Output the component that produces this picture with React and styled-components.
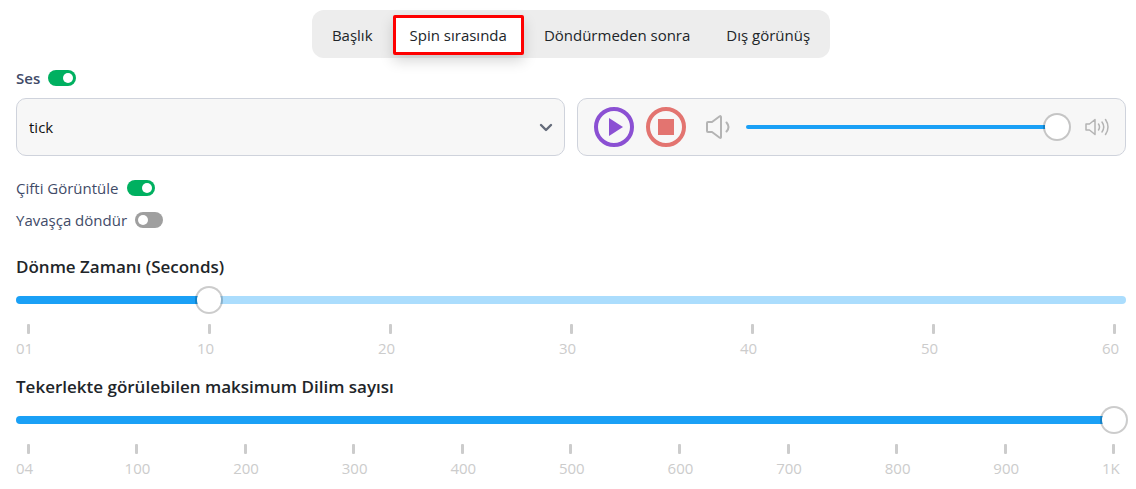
import { useState } from 'react'
import styled, { createGlobalStyle } from 'styled-components'

const colors = {
    blue: '#1aa0f6',
    lightBlue: '#abddfd',
    green: '#00b060',
    grey: '#9f9f9f',
    label: '#414b68',
    border: '#cfd3dc',
    panel: '#f7f7f7',
    tick: '#cccccc',
}

const GlobalStyle = createGlobalStyle`
    * {
        box-sizing: border-box;
    }
    body {
        margin: 0;
        background-color: #fff;
        color: #212529;
        font-family: 'Open Sans', 'Noto Sans', sans-serif;
        font-size: 15px;
        line-height: 24px;
    }
    button, input, select {
        margin: 0;
        font: inherit;
    }
`

const StyledPage = styled('main')`
    padding: 10px 10px 0 16px;
`

const StyledTabBar = styled('nav')`
    display: flex;
    width: fit-content;
    margin: 0 auto;
    padding: 5px 4px 3px;
    gap: 4px;
    border-radius: 12px;
    background-color: #ededed;
`

const StyledTab = styled('button')`
    height: 40px;
    padding: 0 ${(props) => (props.$active ? '14px' : '16px')};
    border: ${(props) => (props.$active ? '3px solid #fe0000' : 'none')};
    border-radius: 2px;
    background-color: ${(props) => (props.$active ? '#fff' : 'transparent')};
    box-shadow: ${(props) =>
        props.$active ? '0 6px 14px rgba(0, 0, 0, 0.16)' : 'none'};
    color: #212529;
    line-height: 22px;
    white-space: nowrap;
`

const StyledSwitchRow = styled('label')`
    display: flex;
    align-items: center;
    width: fit-content;
    height: ${(props) => (props.$bold ? '40px' : '32px')};
    gap: 8px;
    color: ${colors.label};
    font-weight: ${(props) => (props.$bold ? 600 : 400)};
`

const StyledSwitch = styled('input')`
    display: grid;
    align-items: center;
    appearance: none;
    width: 28px;
    height: 16px;
    padding: 0 3px;
    border-radius: 8px;
    background-color: ${colors.grey};
    &::before {
        content: '';
        width: 10px;
        height: 10px;
        border-radius: 50%;
        background-color: #fff;
    }
    &:checked {
        justify-items: end;
        background-color: ${colors.green};
    }
`

const StyledSoundGrid = styled('div')`
    display: grid;
    grid-template-columns: 1fr 1fr;
    gap: 12px;
    margin-bottom: 16px;
`

const StyledSelectBox = styled('div')`
    display: grid;
    align-items: center;
    svg {
        grid-area: 1 / 1;
        justify-self: end;
        margin-right: 12px;
        pointer-events: none;
    }
`

const StyledSelect = styled('select')`
    grid-area: 1 / 1;
    appearance: none;
    width: 100%;
    height: 58px;
    padding: 0 12px;
    border: 1px solid ${colors.border};
    border-radius: 10px;
    background-color: ${colors.panel};
    color: #111;
`

const StyledPlayer = styled('div')`
    display: flex;
    align-items: center;
    height: 58px;
    padding: 0 16px;
    border: 1px solid ${colors.border};
    border-radius: 10px;
    background-color: ${colors.panel};
`

const StyledRoundButton = styled('button')`
    display: grid;
    place-items: center;
    flex: none;
    width: 40px;
    height: 40px;
    margin-right: 12px;
    padding: 0;
    border: 4px solid ${(props) => props.$color};
    border-radius: 50%;
    background-color: transparent;
    color: ${(props) => props.$color};
`

const StyledVolume = styled('div')`
    display: flex;
    align-items: center;
    flex: 1;
    padding-left: 8px;
    gap: 16px;
    color: #b4b4b4;
    svg {
        flex: none;
    }
`

const StyledRange = styled('input')`
    --fill: calc(12px + (100% - 24px) * ${(props) => props.$fill});
    display: block;
    appearance: none;
    flex: 1;
    width: 100%;
    min-width: 0;
    height: 24px;
    background: transparent;
    &::-webkit-slider-runnable-track {
        height: ${(props) => props.$thickness}px;
        border-radius: 4px;
        background: linear-gradient(
            to right,
            ${colors.blue} var(--fill),
            ${colors.lightBlue} var(--fill)
        );
    }
    &::-webkit-slider-thumb {
        appearance: none;
        width: 24px;
        height: 24px;
        margin-top: ${(props) => (props.$thickness - 24) / 2}px;
        border-radius: 50%;
        background-color: #fff;
        box-shadow: 0 0 0 2px rgba(0, 0, 0, 0.2);
    }
`

const StyledFields = styled('div')`
    display: grid;
    gap: 15px;
    padding-top: 19px;
`

const StyledField = styled('section')`
    label {
        display: block;
        margin-bottom: 9px;
        font-size: 17px;
        font-weight: 600;
    }
`

const StyledScale = styled('div')`
    display: flex;
    justify-content: space-between;
    margin-top: 12px;
    color: ${colors.tick};
`

const StyledMark = styled('span')`
    width: 24px;
    &::before {
        content: '';
        display: block;
        width: 3px;
        height: 10px;
        margin: 0 auto 2px;
        border-radius: 1px;
        background-color: ${colors.tick};
    }
`

const tabs = ['Başlık', 'Spin sırasında', 'Döndürmeden sonra', 'Dış görünüş']
const seconds = ['01', '10', '20', '30', '40', '50', '60']
const slices = [
    '04',
    '100',
    '200',
    '300',
    '400',
    '500',
    '600',
    '700',
    '800',
    '900',
    '1K',
]

function Switch({ label, bold, defaultChecked }) {
    return (
        <StyledSwitchRow $bold={bold}>
            {label}
            <StyledSwitch
                type="checkbox"
                role="switch"
                defaultChecked={defaultChecked}
            />
        </StyledSwitchRow>
    )
}

function Range({ initial, max, thickness = 8, ...rest }) {
    const [value, setValue] = useState(initial)
    return (
        <StyledRange
            type="range"
            min="0"
            max={max}
            value={value}
            onChange={(e) => setValue(Number(e.target.value))}
            $fill={value / max}
            $thickness={thickness}
            {...rest}
        />
    )
}

function RangeField({ id, title, marks, initial, max }) {
    return (
        <StyledField>
            <label htmlFor={id}>{title}</label>
            <Range id={id} initial={initial} max={max} />
            <StyledScale>
                {marks.map((mark) => (
                    <StyledMark key={mark}>{mark}</StyledMark>
                ))}
            </StyledScale>
        </StyledField>
    )
}

function ChevronIcon() {
    return (
        <svg width="14" height="14" viewBox="0 0 14 14" fill="none">
            <path
                d="M2 5l5 5 5-5"
                stroke="#646b7a"
                strokeWidth="2.4"
                strokeLinecap="round"
                strokeLinejoin="round"
            />
        </svg>
    )
}

function VolumeLowIcon() {
    return (
        <svg
            width="24"
            height="24"
            viewBox="0 0 24 24"
            fill="none"
            stroke="currentColor"
            strokeWidth="2"
            strokeLinecap="round"
            strokeLinejoin="round"
        >
            <path d="M1 8v8q0 1 1 1h4l7.4 5.500q1.600 1 1.600-.5V2q0-1.500-1.600-.5L6 7H2q-1 0-1 1z" />
            <path d="M20.500 7.500q4 4.500 0 9" />
        </svg>
    )
}

function VolumeHighIcon() {
    return (
        <svg
            width="24"
            height="24"
            viewBox="0 0 24 24"
            fill="none"
            stroke="currentColor"
            strokeWidth="1.5"
            strokeLinecap="round"
            strokeLinejoin="round"
        >
            <path d="M1 9v6h3.500l5.500 4.500v-15L4.500 9z" />
            <path d="M13.500 9q2 3 0 6M17 7q3.500 5 0 10M20.500 4.500q5 7.500 0 15" />
        </svg>
    )
}

function App() {
    const [activeTab, setActiveTab] = useState(tabs[1])
    return (
        <StyledPage>
            <GlobalStyle />
            <StyledTabBar>
                {tabs.map((tab) => (
                    <StyledTab
                        key={tab}
                        type="button"
                        $active={tab === activeTab}
                        onClick={() => setActiveTab(tab)}
                    >
                        {tab}
                    </StyledTab>
                ))}
            </StyledTabBar>
            <Switch label="Ses" bold defaultChecked />
            <StyledSoundGrid>
                <StyledSelectBox>
                    <StyledSelect aria-label="Ses" defaultValue="tick">
                        <option value="tick">tick</option>
                    </StyledSelect>
                    <ChevronIcon />
                </StyledSelectBox>
                <StyledPlayer>
                    <StyledRoundButton
                        type="button"
                        aria-label="Play"
                        $color="#8b50d3"
                    >
                        <svg width="32" height="32" viewBox="0 0 32 32">
                            <path d="M11 7l14 9-14 9z" fill="currentColor" />
                        </svg>
                    </StyledRoundButton>
                    <StyledRoundButton
                        type="button"
                        aria-label="Stop"
                        $color="#e37470"
                    >
                        <svg width="32" height="32" viewBox="0 0 32 32">
                            <path d="M8 8h16v16H8z" fill="currentColor" />
                        </svg>
                    </StyledRoundButton>
                    <StyledVolume>
                        <VolumeLowIcon />
                        <Range
                            aria-label="Volume"
                            initial={100}
                            max={100}
                            thickness={4}
                        />
                        <VolumeHighIcon />
                    </StyledVolume>
                </StyledPlayer>
            </StyledSoundGrid>
            <Switch label="Çifti Görüntüle" defaultChecked />
            <Switch label="Yavaşça döndür" />
            <StyledFields>
                <RangeField
                    id="spin-time"
                    title="Dönme Zamanı (Seconds)"
                    marks={seconds}
                    initial={10}
                    max={60}
                />
                <RangeField
                    id="max-slices"
                    title="Tekerlekte görülebilen maksimum Dilim sayısı"
                    marks={slices}
                    initial={1000}
                    max={1000}
                />
            </StyledFields>
        </StyledPage>
    )
}

export default App
